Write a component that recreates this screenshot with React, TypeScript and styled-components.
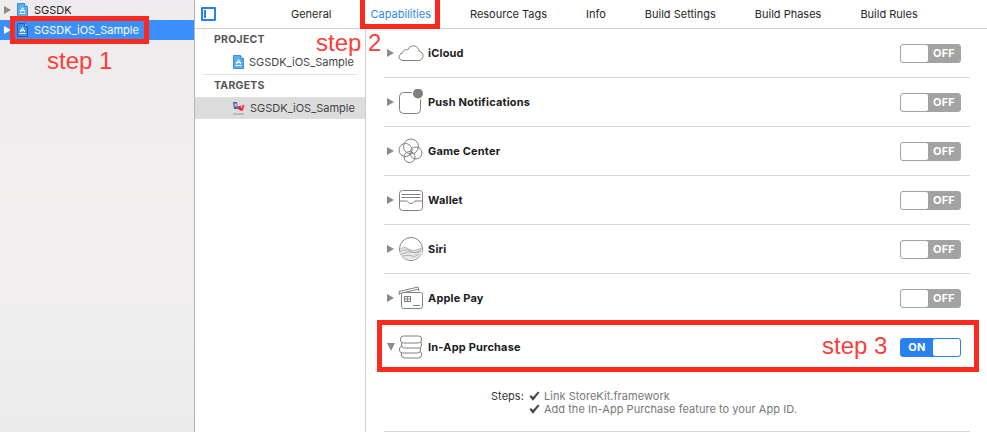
import React from "react";
import styled, { createGlobalStyle } from "styled-components";

const Global = createGlobalStyle`
  html, body { margin: 0; padding: 0; background: #fff; }
  body { font-family: "Inter", "Liberation Sans", Arial, sans-serif; -webkit-font-smoothing: antialiased; }
`;

const Page = styled.div`
  position: relative;
  width: 987px;
  height: 432px;
  display: flex;
  overflow: hidden;
  background: #fff;
`;

const Navigator = styled.aside`
  width: 194px;
  flex: none;
  border-right: 1px solid #b4b4b4;
  background: linear-gradient(180deg, #eeebee 0%, #f3efef 45%, #f0eef0 70%, #ecebec 100%);
`;

const NavRow = styled.div<{ $selected?: boolean }>`
  height: 20px;
  display: flex;
  align-items: center;
  padding-left: 4px;
  background: ${(p) => (p.$selected ? "#3b8ffa" : "transparent")};
  color: ${(p) => (p.$selected ? "#fff" : "#222")};
  font-size: 11px;
  letter-spacing: 0;
`;

const Disclosure = styled.span<{ $color?: string; $open?: boolean }>`
  width: 0;
  height: 0;
  flex: none;
  ${(p) =>
    p.$open
      ? `border-left: 4.5px solid transparent; border-right: 4.5px solid transparent; border-top: 8px solid ${p.$color || "#8a8a8a"}; margin-right: -1px;`
      : `border-top: 4.5px solid transparent; border-bottom: 4.5px solid transparent; border-left: 7px solid ${p.$color || "#8a8a8a"};`}
`;

const NavIcon = styled.span`
  display: flex;
  margin: 0 6px 0 6px;
`;

const Main = styled.main`
  flex: 1;
  display: flex;
  flex-direction: column;
  min-width: 0;
`;

const TabBar = styled.nav`
  position: relative;
  height: 28px;
  flex: none;
  display: flex;
  align-items: center;
  gap: 39px;
  padding-left: 96px;
  border-bottom: 1px solid #cfcfcf;
`;

const SidebarToggle = styled.span`
  position: absolute;
  left: 6px;
  top: 7px;
  width: 11px;
  height: 10px;
  border: 2px solid #2a7ff0;
  border-radius: 1px;
  &::before {
    content: "";
    display: block;
    width: 2px;
    height: 8px;
    margin: 1px 0 0 1px;
    background: #2a7ff0;
  }
`;

const Tab = styled.span<{ $active?: boolean }>`
  font-size: 11px;
  letter-spacing: 0;
  white-space: nowrap;
  color: ${(p) => (p.$active ? "#2f86f0" : "#262626")};
`;

const Body = styled.div`
  flex: 1;
  display: flex;
  min-height: 0;
`;

const TargetList = styled.div`
  width: 170px;
  flex: none;
  border-right: 1px solid #d0d0d0;
  padding-top: 3px;
`;

const Heading = styled.div`
  height: 16px;
  line-height: 16px;
  padding-left: 19px;
  font-size: 10.5px;
  font-weight: 700;
  letter-spacing: 0.25px;
  color: #555;
`;

const TargetItem = styled.div<{ $selected?: boolean }>`
  height: 22px;
  display: flex;
  align-items: center;
  gap: 5px;
  padding-left: 38px;
  font-size: 11px;
  letter-spacing: 0;
  color: #444;
  background: ${(p) => (p.$selected ? "#dcdcdc" : "transparent")};
`;

const ListRule = styled.div`
  height: 1px;
  margin: 1px 8px 3px;
  background: #e2e2e2;
`;

const HeadingSpacer = styled.div<{ $h: number }>`
  height: ${(p) => p.$h}px;
`;

const Capabilities = styled.section`
  flex: 1;
  min-width: 0;
  padding: 0 17px 0 18px;
`;

const CapRow = styled.div`
  height: 48px;
  display: flex;
  align-items: center;
  padding-left: 3px;
  border-bottom: 1px solid #d6d6d6;
`;

const CapIcon = styled.span`
  width: 26px;
  height: 26px;
  flex: none;
  margin: 0 4px 0 4px;
  display: flex;
`;

const CapTitle = styled.span`
  flex: 1;
  font-size: 11px;
  font-weight: 700;
  letter-spacing: 0.18px;
  color: #1c1c1c;
`;

const Toggle = styled.span<{ $on?: boolean }>`
  box-sizing: border-box;
  width: 61px;
  height: 19px;
  margin-right: 9px;
  border-radius: 3px;
  border: 1px solid ${(p) => (p.$on ? "#2a80f2" : "#a3a3a3")};
  background: ${(p) => (p.$on ? "#2a80f2" : "#a3a3a3")};
  display: flex;
  flex-direction: ${(p) => (p.$on ? "row" : "row-reverse")};
  align-items: stretch;
  color: #fff;
  font-size: 11px;
  font-weight: 700;
`;

const ToggleText = styled.span`
  flex: 1;
  display: flex;
  align-items: center;
  justify-content: center;
  letter-spacing: 0.2px;
`;

const ToggleKnob = styled.span`
  width: 27px;
  background: #fff;
  border-radius: 2px;
`;

const Detail = styled.div`
  height: 60px;
  box-sizing: border-box;
  padding: 17px 0 0 107px;
  display: grid;
  grid-template-columns: auto 1fr;
  column-gap: 5px;
  grid-auto-rows: 13px;
  font-size: 11px;
  letter-spacing: 0.04px;
  border-bottom: 1px solid #d6d6d6;
`;

const DetailLabel = styled.span`
  color: #333;
`;

const StepText = styled.span`
  grid-column: 2;
  color: #777;
  display: flex;
  align-items: center;
  gap: 4px;
  white-space: nowrap;
`;

const Annotation = styled.div<{ $x: number; $y: number; $w: number; $h: number }>`
  position: absolute;
  box-sizing: border-box;
  left: ${(p) => p.$x}px;
  top: ${(p) => p.$y}px;
  width: ${(p) => p.$w}px;
  height: ${(p) => p.$h}px;
  border: 5px solid #fb2a1e;
  pointer-events: none;
`;

const StepLabel = styled.span<{ $x: number; $y: number }>`
  position: absolute;
  left: ${(p) => p.$x}px;
  top: ${(p) => p.$y}px;
  font-family: "Liberation Sans", Arial, sans-serif;
  font-size: 24px;
  line-height: 28px;
  color: #fb3e38;
  white-space: nowrap;
`;

const DocIcon = ({ light }: { light?: boolean }) => (
  <svg width="11" height="14" viewBox="0 0 11 14">
    <path d="M.5.5h7l3 3v10H.5z" fill={light ? "#3d8ee8" : "#5aaef0"} stroke={light ? "#1d5fae" : "#3b8fdc"} />
    <path d="M7.5.5v3h3" fill="#cfe6fb" stroke={light ? "#1d5fae" : "#3b8fdc"} />
    <path d="M3.500 9 5.500 4.500 7.500 9M3 7.500h5" fill="none" stroke="#fff" strokeWidth="1" />
    <path d="M2.500 10.500h6" stroke="#fff" strokeWidth="1" />
  </svg>
);

const TargetIcon = () => (
  <svg width="12" height="15" viewBox="0 0 12 15">
    <path d="M0 1h4l1 7H1z" fill="#4a5fb0" />
    <path d="M1.500 2.500h2l.4 3h-2z" fill="#c8cdf0" />
    <path d="M4.500 5.500l7-1.500-2 6-3.500-1z" fill="#e8202a" />
    <path d="M7.500 5.500l2-.4-1 2.400z" fill="#fff" />
    <path d="M0 13h11" stroke="#9a9ab0" strokeWidth="1.400" strokeDasharray="1.500 .6" />
  </svg>
);

const stroke = { fill: "none", stroke: "#808080", strokeWidth: 1 };

const Cloud = () => (
  <svg width="26" height="26" viewBox="0 0 26 26">
    <path {...stroke} d="M5 20.500c-2.600 0-4-1.800-4-3.600 0-2 1.400-3.400 3.200-3.500C5 10 7.500 9 9.500 10 11 7 13.500 5.500 16.500 6c2.800.5 4.500 2.700 4.500 5.200 2.500.5 4 2.400 4 4.700 0 2.500-1.800 4.600-4.500 4.600z" />
  </svg>
);

const Push = () => (
  <svg width="26" height="26" viewBox="0 0 26 26">
    <rect {...stroke} x="1.500" y="3.500" width="21" height="21" rx="4" />
    <circle cx="20" cy="4.500" r="6.500" fill="#fff" />
    <circle cx="20" cy="4.500" r="5" fill="#808080" />
  </svg>
);

const GameCenter = () => (
  <svg width="26" height="26" viewBox="0 0 26 26">
    <circle {...stroke} cx="13" cy="8.500" r="7.500" />
    <circle {...stroke} cx="7.500" cy="12" r="6.500" />
    <circle {...stroke} cx="18" cy="15" r="6" />
    <circle {...stroke} cx="11.500" cy="19" r="5.500" />
  </svg>
);

const Wallet = () => (
  <svg width="26" height="26" viewBox="0 0 26 26">
    <rect {...stroke} x="1.500" y="3.500" width="23" height="20" rx="3" />
    <path {...stroke} d="M3.500 7.500h19M3.500 10.500h19" />
    <path {...stroke} d="M1.500 14H9c1 0 1.200 2.500 4 2.500s3-2.500 4-2.500h7.500" />
  </svg>
);

const Siri = () => (
  <svg width="26" height="26" viewBox="0 0 26 26">
    <circle cx="13" cy="13" r="11.500" fill="#fff" stroke="#808080" />
    <path d="M2 14c3-3 6-3 9-1s6 2 13-1v5c-2 4-6 7-11 7S4 21 2 17z" fill="#e6e6e6" />
    <path d="M1.500 14c3-3 6-3 9-1s6 2 13-1M2 16c3-2 7-3 10-1s7 2 11-1M3 18c4 0 6-3 10-2s6 2 10-2M5 20c4-1 6-1 9 0s4 0 7-2" fill="none" stroke="#a0a0a0" strokeWidth=".8" />
  </svg>
);

const ApplePay = () => (
  <svg width="26" height="26" viewBox="0 0 26 26">
    <path {...stroke} d="M1.500 10 1 6.500 20 2l1 4" />
    <path {...stroke} d="M2 8.500 21 4" />
    <rect x="3.500" y="7.500" width="21" height="16" rx="2" fill="#fff" stroke="#808080" />
    <rect {...stroke} x="6.500" y="11.500" width="6" height="5" />
    <path {...stroke} d="M6.500 14h6M9.500 11.500v5M15 20.500h7" />
  </svg>
);

const Coins = () => (
  <svg width="26" height="26" viewBox="0 0 26 26">
    <g fill="#fff" stroke="#808080">
      <rect x="3.500" y="17" width="20" height="7" rx="3" />
      <rect x="1.500" y="12" width="21" height="7" rx="3" />
      <rect x="3.500" y="7" width="20" height="7" rx="3" />
      <rect x="2.500" y="2" width="21" height="7" rx="3" />
    </g>
  </svg>
);

const Check = () => (
  <svg width="11" height="10" viewBox="0 0 11 10">
    <path d="M.5 5.500 2 4l2 2 5-5.500 1.500 1L4 9.800z" fill="#444" />
  </svg>
);

const tabs = ["General", "Capabilities", "Resource Tags", "Info", "Build Settings", "Build Phases", "Build Rules"];

const caps: { title: string; icon: React.ReactNode }[] = [
  { title: "iCloud", icon: <Cloud /> },
  { title: "Push Notifications", icon: <Push /> },
  { title: "Game Center", icon: <GameCenter /> },
  { title: "Wallet", icon: <Wallet /> },
  { title: "Siri", icon: <Siri /> },
  { title: "Apple Pay", icon: <ApplePay /> },
];

export default function App() {
  return (
    <Page>
      <Global />
      <Navigator>
        <NavRow>
          <Disclosure />
          <NavIcon><DocIcon /></NavIcon>
          SGSDK
        </NavRow>
        <NavRow $selected>
          <Disclosure $color="#fff" />
          <NavIcon><DocIcon light /></NavIcon>
          SGSDK_iOS_Sample
        </NavRow>
      </Navigator>
      <Main>
        <TabBar>
          <SidebarToggle />
          {tabs.map((t) => (
            <Tab key={t} $active={t === "Capabilities"}>{t}</Tab>
          ))}
        </TabBar>
        <Body>
          <TargetList>
            <Heading>PROJECT</Heading>
            <HeadingSpacer $h={3} />
            <TargetItem><DocIcon />SGSDK_iOS_Sample</TargetItem>
            <ListRule />
            <Heading>TARGETS</Heading>
            <HeadingSpacer $h={3} />
            <TargetItem $selected><TargetIcon />SGSDK_iOS_Sample</TargetItem>
          </TargetList>
          <Capabilities>
            {caps.map((c) => (
              <CapRow key={c.title}>
                <Disclosure />
                <CapIcon>{c.icon}</CapIcon>
                <CapTitle>{c.title}</CapTitle>
                <Toggle>
                  <ToggleText>OFF</ToggleText>
                  <ToggleKnob />
                </Toggle>
              </CapRow>
            ))}
            <CapRow>
              <Disclosure $open />
              <CapIcon><Coins /></CapIcon>
              <CapTitle>In-App Purchase</CapTitle>
              <Toggle $on>
                <ToggleText>ON</ToggleText>
                <ToggleKnob />
              </Toggle>
            </CapRow>
            <Detail>
              <DetailLabel>Steps:</DetailLabel>
              <StepText><Check />Link StoreKit.framework</StepText>
              <StepText><Check />Add the In-App Purchase feature to your App ID.</StepText>
            </Detail>
          </Capabilities>
        </Body>
      </Main>
      <Annotation $x={10} $y={16} $w={139} $h={28} />
      <Annotation $x={360} $y={-6} $w={80} $h={35} />
      <Annotation $x={377} $y={320} $w={602} $h={52} />
      <StepLabel $x={47} $y={47}>step 1</StepLabel>
      <StepLabel $x={316} $y={29}>step 2</StepLabel>
      <StepLabel $x={822} $y={332}>step 3</StepLabel>
    </Page>
  );
}
